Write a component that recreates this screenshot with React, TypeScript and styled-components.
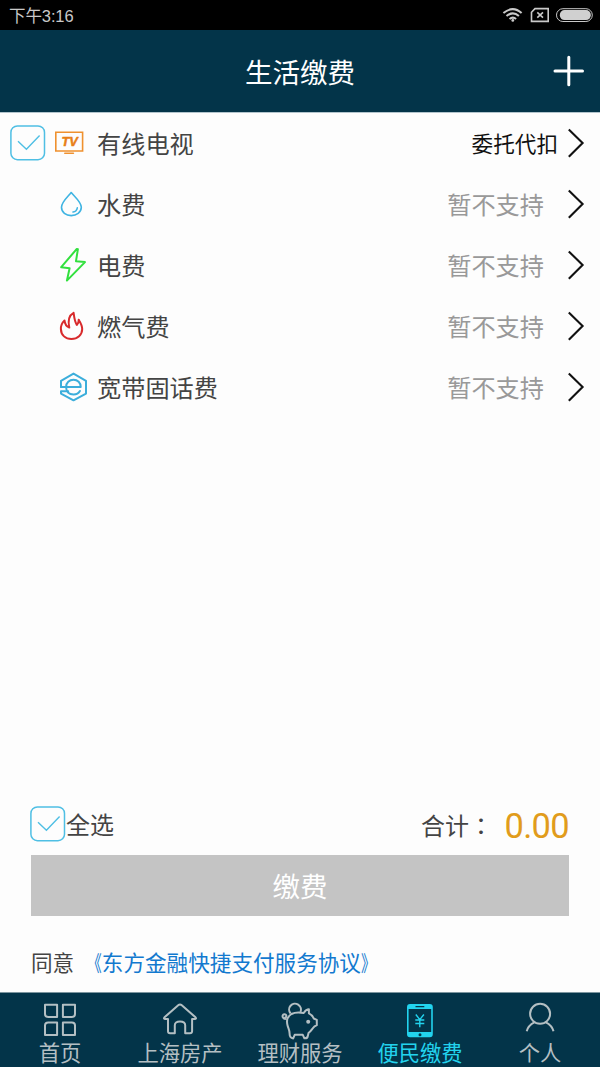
import React from 'react';
import styled, { createGlobalStyle } from 'styled-components';

const GlobalStyle = createGlobalStyle`
  * { box-sizing: border-box; }
  body {
    margin: 0;
    background: #fdfdfd;
    font-family: Roboto, "Noto Sans CJK SC", sans-serif;
  }
`;

const Screen = styled.div`
  width: 600px;
  height: 1067px;
  display: flex;
  flex-direction: column;
  overflow: hidden;
  background: #fdfdfd;
`;

const StatusBar = styled.div`
  height: 30px;
  flex: none;
  display: flex;
  align-items: center;
  justify-content: space-between;
  padding: 0 7px 0 9px;
  background: #000;
  color: #c9c9c9;
`;

const Clock = styled.span`
  padding-top: 3px;
  font-family: "Liberation Sans", "Noto Sans CJK SC", sans-serif;
  font-size: 16.5px;
  line-height: 27px;
  letter-spacing: -0.1px;
`;

const Header = styled.header`
  height: 83px;
  flex: none;
  display: grid;
  grid-template-columns: 60px 1fr 60px;
  align-items: center;
  background: #033449;
  border-bottom: 1px solid #b3c5cd;
`;

const Title = styled.h1`
  grid-column: 2;
  margin: 0;
  padding-top: 6px;
  text-align: center;
  font-size: 27.5px;
  font-weight: 400;
  line-height: 40px;
  color: #fff;
`;

const AddButton = styled.button`
  border: 0;
  padding: 0 0 0 13px;
  background: none;
  display: flex;
`;

const BillList = styled.main`
  flex: 1;
  margin-top: -1px;
`;

const BillRow = styled.div`
  height: 61.2px;
  display: grid;
  grid-template-columns: 41px 46px 1fr auto 18px;
  align-items: center;
  padding: 0 15px 0 10px;
`;

const BillName = styled.span`
  padding-top: 4px;
  font-size: 24.2px;
  line-height: 36px;
  color: #444;
`;

const BillStatus = styled.span<{ $active?: boolean }>`
  padding-top: 4px;
  font-size: ${p => (p.$active ? '21.6px' : '24.2px')};
  line-height: 36px;
  color: ${p => (p.$active ? '#111' : '#999')};
  margin-right: ${p => (p.$active ? '9px' : '23px')};
`;

const Footer = styled.section`
  flex: none;
  height: 192px;
  display: flex;
  flex-direction: column;
  padding: 0 31px;
`;

const SummaryRow = styled.div`
  height: 55px;
  display: flex;
  align-items: center;
  padding-bottom: 7px;
  margin-left: -1px;
`;

const SummaryLabel = styled.span`
  padding-top: 4px;
  font-size: 24px;
  line-height: 36px;
  color: #444;
`;

const Colon = styled.span`
  font-family: "Noto Sans CJK TC", sans-serif;
`;

const Total = styled.div`
  margin-left: auto;
  display: flex;
  align-items: center;
`;

const Amount = styled.span`
  width: 76px;
  padding-top: 3px;
  text-align: right;
  font-size: 34.5px;
  line-height: 40px;
  letter-spacing: -0.7px;
  color: #e19c1c;
`;

const PayButton = styled.button`
  height: 61px;
  flex: none;
  border: 0;
  padding: 4px 0 0;
  background: #c4c4c4;
  color: #fff;
  font-family: inherit;
  font-size: 27.5px;
  line-height: 40px;
`;

const Agreement = styled.p`
  margin: 32px 0 0;
  font-size: 21.6px;
  line-height: 32px;
  color: #444;
  white-space: nowrap;
`;

const AgreementLink = styled.a`
  color: #1279cf;
  margin-left: 6px;
`;

const TitleMark = styled.span<{ $side: 'left' | 'right' }>`
  display: inline-block;
  transform: scaleX(0.68);
  transform-origin: ${p => (p.$side === 'left' ? 'right' : 'left')} center;
`;

const TabBar = styled.nav`
  height: 75px;
  flex: none;
  display: grid;
  grid-template-columns: repeat(5, 1fr);
  background: #033449;
  border-top: 1px solid #7c959f;
`;

const Tab = styled.div<{ $active?: boolean }>`
  display: flex;
  flex-direction: column;
  align-items: center;
  padding-top: 7px;
  color: ${p => (p.$active ? '#22d3ee' : '#b4bfc3')};
`;

const TabLabel = styled.span`
  font-size: 21.3px;
  line-height: 28px;
  white-space: nowrap;
`;

const CheckBox = () => (
  <svg width="36" height="36" viewBox="0 0 36 36" fill="none" stroke="#4fbfe4">
    <rect x="0.9" y="0.9" width="33.6" height="33.8" rx="6.5" strokeWidth="1.5" />
    <path d="M8 16.2 16.4 24.2 29.6 10.4" strokeWidth="1.4" />
  </svg>
);

const Chevron = () => (
  <svg width="18" height="32" viewBox="0 0 18 32" fill="none" stroke="#111" strokeWidth="2.1">
    <path d="M1.8 2.4 15.6 16 1.8 29.8" />
  </svg>
);

const BillIcon = ({ children, color }: { children: React.ReactNode; color: string }) => (
  <svg width="40" height="40" viewBox="0 0 40 40" fill="none" stroke={color} strokeWidth="2" strokeLinejoin="round" strokeLinecap="round">
    {children}
  </svg>
);

const TvIcon = () => (
  <BillIcon color="#ef912f">
    <path d="M4.8 9.3H31.6V28H4.8ZM13.8 30.3H22.4" strokeLinejoin="miter" strokeWidth="1.6" />
    <text x="10.4" y="23" fontFamily="Liberation Sans, sans-serif" fontSize="12.6" fontWeight="700" fontStyle="italic" textLength="16.4" lengthAdjust="spacingAndGlyphs" fill="#e87f16" stroke="#e87f16" strokeWidth=".5">TV</text>
  </BillIcon>
);

const WaterIcon = () => (
  <BillIcon color="#3fb4e2">
    <path d="M20.2 8.5C17.3 12.2 10.5 18 10.5 23.2C10.5 28.3 15 31.6 20.2 31.6S30.3 28.3 30.3 23.2C30.3 18 23.1 12.2 20.2 8.5Z" strokeWidth="1.6" />
    <path d="M26.3 23.8C26 26 24.3 27.6 22 28.1" strokeWidth="1.5" />
  </BillIcon>
);

const PowerIcon = () => (
  <BillIcon color="#32e03e">
    <path d="M25.8 3.9 10.2 22.2 18.6 23.2 15.9 35.6 34 17.1 25 16.2 26.9 4.2Z" />
  </BillIcon>
);

const GasIcon = () => (
  <BillIcon color="#d82a2c">
    <path d="M13.5 14.4C10.8 17 9.8 20 9.9 23.1C10.1 29.2 14.5 33.1 20.4 33.1C26.5 33.1 31.2 29 31.2 23.1C31.2 19.5 29.4 16.4 27.7 13.7C27.9 16.1 27.3 17.6 25.8 18.9C23.6 15.7 23.2 11.5 22.6 6.8C18.3 9.2 16.6 14 18.3 21.6C15.1 20.3 13.8 17.8 13.5 14.4Z" />
  </BillIcon>
);

const PhoneLineIcon = () => (
  <BillIcon color="#3caedb">
    <path d="M10 16.2V13.8L22.5 6.6 35 13.8V26.6L22.5 33.3 10 26.6V24.2H17.2" />
    <path d="M10 20H29.7C29.7 15.8 26.7 12.8 22.5 12.8S15.1 15.8 15.1 20C15.1 24.5 18 27.5 22.5 27.5C25.4 27.5 27.7 26.3 28.9 24" />
    <path d="M10 16.2V20" />
  </BillIcon>
);

const TabIcon = ({ children }: { children: React.ReactNode }) => (
  <svg width="40" height="40" viewBox="0 0 40 40" overflow="visible" fill="none" stroke="currentColor" strokeWidth="2" strokeLinejoin="round">
    {children}
  </svg>
);

const GridIcon = () => (
  <TabIcon>
    <path d="M5 4.7H17.1V16.9H8.2Q5 16.9 5 13.9ZM22.9 4.7H35V13.9Q35 16.9 31.9 16.9H22.9ZM8.2 22.5H17.1V35H5V25.6Q5 22.5 8.2 22.5ZM22.9 22.5H31.9Q35 22.5 35 25.6V35H22.9Z" />
  </TabIcon>
);

const HouseIcon = () => (
  <TabIcon>
    <path d="M18.2 5.3Q20 3.7 21.8 5.3L35.5 17.3Q36.7 18.7 35 19.1H32.1V31.2Q32 33.2 30 33.2H25.2V25.3Q25.2 21.5 20 21.5T14.8 25.3V33.2H10Q8 33.2 8 31.2V19.1H5Q3.3 18.7 4.5 17.3Z" />
  </TabIcon>
);

const PigIcon = () => (
  <TabIcon>
    <path d="M11.5 14C7.5 16.3 6.3 20.5 7.5 25.3C8.3 28.7 9.8 30.4 9.6 34Q9.7 38 13.2 38.4L14.7 34.8H22.8L24.4 38.3Q27.4 38.6 27.8 36L28.6 32.8C31.2 31.4 32 28.6 34.2 26.7L36.8 25.2V19.8L33.7 18.5C32.7 16 31 14.3 28.9 13.4V9.3C26.5 9.3 25.1 10.9 23.7 13C20 12.2 15.2 12 11.5 14Z" />
    <path d="M10.6 13.5A5.9 5.9 0 1 1 20.4 12M6.7 18.6C2.5 20 1.2 14.7 4.2 14.2C7.2 14 7 17.7 4.4 17.7" />
    <circle cx="28.2" cy="21.7" r="2" fill="currentColor" stroke="none" />
  </TabIcon>
);

const MobilePayIcon = () => (
  <TabIcon>
    <path fill="currentColor" stroke="none" fillRule="evenodd" d="M10 3.9H29.8Q32.8 3.9 32.8 6.9V34.3Q32.8 37.3 29.8 37.3H10Q7 37.3 7 34.3V6.9Q7 3.9 10 3.9ZM8.6 9V32.1H31.2V9ZM15.5 6V7.2H24.3V6ZM20 33.2A1.5 1.5 0 1 0 20 36.2A1.5 1.5 0 1 0 20 33.2Z" />
    <path d="M15.8 14.5 19.8 19.6 23.9 14.5M15.3 20H24.3M15.3 23.5H24.3M19.8 19.6V27.2" strokeWidth="1.4" />
  </TabIcon>
);

const PersonIcon = () => (
  <TabIcon>
    <circle cx="20.1" cy="13.8" r="10" />
    <path d="M6.7 31.2C7.7 27.3 10.3 24.3 14.3 22.3M25.9 22.3C29.9 24.3 32.5 27.3 33.5 31.2" />
  </TabIcon>
);

const StatusIcons = () => (
  <svg width="92" height="20" viewBox="0 0 92 20" fill="none" stroke="#c9c9c9">
    <path d="M2.4 8.1Q12 .2 20.6 8.1M5.5 11.1Q12 5.6 17.9 11.1M8.5 14Q11.9 11.3 15.1 14" strokeWidth="2" />
    <circle cx="11.8" cy="15.4" r="1.4" fill="#c9c9c9" stroke="none" />
    <path d="M34 3.6H47.2V16.4H30.5V7.3ZM36.3 7.3 42 12.7M42 7.3 36.3 12.7" strokeWidth="1.6" />
    <rect x="55.5" y="3.7" width="35.8" height="12.8" rx="6.4" strokeWidth="1" />
    <rect x="58.8" y="5.1" width="31" height="10" rx="4.8" fill="#d0d0d0" stroke="none" />
  </svg>
);

const bills = [
  { name: '有线电视', status: '委托代扣', active: true, Icon: TvIcon },
  { name: '水费', status: '暂不支持', active: false, Icon: WaterIcon },
  { name: '电费', status: '暂不支持', active: false, Icon: PowerIcon },
  { name: '燃气费', status: '暂不支持', active: false, Icon: GasIcon },
  { name: '宽带固话费', status: '暂不支持', active: false, Icon: PhoneLineIcon },
];

const tabs = [
  { label: '首页', Icon: GridIcon },
  { label: '上海房产', Icon: HouseIcon },
  { label: '理财服务', Icon: PigIcon },
  { label: '便民缴费', Icon: MobilePayIcon, active: true },
  { label: '个人', Icon: PersonIcon },
];

export default function App() {
  return (
    <Screen>
      <GlobalStyle />
      <StatusBar>
        <Clock>下午3:16</Clock>
        <StatusIcons />
      </StatusBar>
      <Header>
        <Title>生活缴费</Title>
        <AddButton aria-label="添加">
          <svg width="32" height="32" viewBox="0 0 32 32" stroke="#fff" strokeWidth="3" strokeLinecap="round">
            <path d="M2 16H29.5M15.8 2.2V29.8" />
          </svg>
        </AddButton>
      </Header>
      <BillList>
        {bills.map(({ name, status, active, Icon }) => (
          <BillRow key={name}>
            {active ? <CheckBox /> : <span />}
            <Icon />
            <BillName>{name}</BillName>
            <BillStatus $active={active}>{status}</BillStatus>
            <Chevron />
          </BillRow>
        ))}
      </BillList>
      <Footer>
        <SummaryRow>
          <CheckBox />
          <SummaryLabel>全选</SummaryLabel>
          <Total>
            <SummaryLabel>合计<Colon lang="zh-TW">：</Colon></SummaryLabel>
            <Amount>0.00</Amount>
          </Total>
        </SummaryRow>
        <PayButton>缴费</PayButton>
        <Agreement>
          同意
          <AgreementLink>
            <TitleMark $side="left">《</TitleMark>东方金融快捷支付服务协议<TitleMark $side="right">》</TitleMark>
          </AgreementLink>
        </Agreement>
      </Footer>
      <TabBar>
        {tabs.map(({ label, Icon, active }) => (
          <Tab key={label} $active={active}>
            <Icon />
            <TabLabel>{label}</TabLabel>
          </Tab>
        ))}
      </TabBar>
    </Screen>
  );
}
